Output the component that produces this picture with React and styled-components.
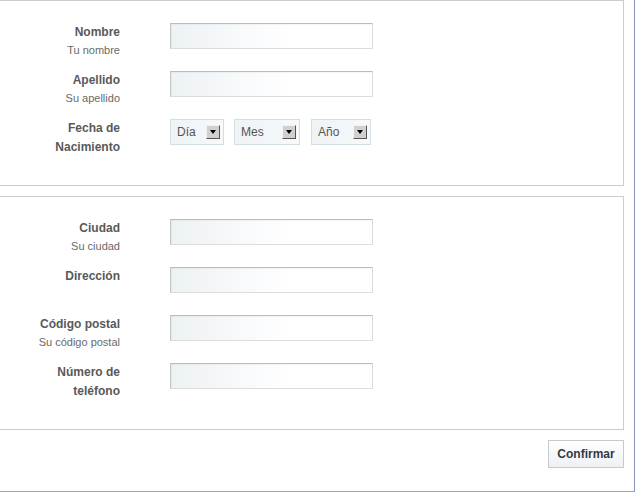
import React from "react";
import styled, { createGlobalStyle } from "styled-components";

const GlobalStyle = createGlobalStyle`
  body {
    margin: 0;
    background: #fff;
    font-family: "Liberation Sans", Arial, sans-serif;
    overflow: hidden;
  }
`;

const personal = [
  { label: "Nombre", hint: "Tu nombre" },
  { label: "Apellido", hint: "Su apellido" },
];

const address = [
  { label: "Ciudad", hint: "Su ciudad" },
  { label: "Dirección" },
  { label: "Código postal", hint: "Su código postal" },
  { label: ["Número de", "teléfono"] },
];

const FieldRow = ({ label, hint }) => (
  <Row>
    <LabelCell>
      {[].concat(label).map((line) => (
        <Title key={line}>{line}</Title>
      ))}
      {hint && <Hint>{hint}</Hint>}
    </LabelCell>
    <TextInput type="text" />
  </Row>
);

const DateSelect = ({ text, width, offset = 0 }) => (
  <SelectWrap $width={width} $offset={offset}>
    <Select defaultValue="">
      <option value="">{text}</option>
    </Select>
    <Arrow>
      <svg width="6" height="4" viewBox="0 0 6 4">
        <path d="M0 0h6L3 4z" fill="#000" />
      </svg>
    </Arrow>
  </SelectWrap>
);

const App = () => {
  return (
    <>
      <GlobalStyle />
      <Page>
        <Fieldset>
          {personal.map((f) => (
            <FieldRow key={f.label} {...f} />
          ))}
          <Row>
            <LabelCell>
              <Title>Fecha de</Title>
              <Title>Nacimiento</Title>
            </LabelCell>
            <Selects>
              <DateSelect text="Día" width={54} />
              <DateSelect text="Mes" width={66} />
              <DateSelect text="Año" width={60} offset={1} />
            </Selects>
          </Row>
        </Fieldset>
        <Fieldset $spaced>
          {address.map((f) => (
            <FieldRow key={[].concat(f.label).join(" ")} {...f} />
          ))}
        </Fieldset>
        <ButtonBar>
          <Button type="button">Confirmar</Button>
        </ButtonBar>
      </Page>
    </>
  );
};

export default App;

const Page = styled.div`
  box-sizing: border-box;
  width: 647px;
  margin-left: -12px;
  padding-bottom: 23px;
  border-right: 1px solid #8795bd;
  border-bottom: 1px solid #a0a5b2;
`;

const Fieldset = styled.fieldset`
  margin: ${(p) => (p.$spaced ? "10px" : "0")} 10px 0 0;
  padding: 21px 0 19px 0;
  border: 1px solid #cccccc;
  min-width: 0;
`;

const Row = styled.div`
  display: grid;
  grid-template-columns: 131px auto;
  column-gap: 50px;
  align-items: start;
  min-height: 48px;
`;

const LabelCell = styled.div`
  margin-top: 1px;
  text-align: right;
`;

const Title = styled.div`
  font-size: 12px;
  font-weight: bold;
  line-height: 19px;
  color: #595959;
`;

const Hint = styled.div`
  font-size: 11px;
  line-height: 16px;
  color: #6a6a6a;
`;

const TextInput = styled.input`
  box-sizing: border-box;
  width: 203px;
  height: 26px;
  margin: 1px 0 0;
  padding: 0 6px;
  border: 1px solid;
  border-color: #bcbcbc #dcdcdc #dcdcdc #c6c6c6;
  background: linear-gradient(to right, #edf2f5 0%, #ffffff 60%);
  box-shadow: inset 1px 1px 1px rgba(0, 0, 0, 0.04);
  outline: none;
`;

const Selects = styled.div`
  display: flex;
  gap: 10px;
  margin-top: 1px;
`;

const SelectWrap = styled.div`
  position: relative;
  width: ${(p) => p.$width}px;
  height: 26px;
  margin-left: ${(p) => p.$offset}px;
`;

const Select = styled.select`
  appearance: none;
  box-sizing: border-box;
  width: 100%;
  height: 100%;
  margin: 0;
  padding: 0 0 0 6px;
  border: 1px solid #d3dde4;
  border-radius: 0;
  background: linear-gradient(to right, #eef3f6, #f7f9fb);
  font-family: "Liberation Sans", Arial, sans-serif;
  font-size: 12px;
  color: #555555;
  outline: none;
`;

const Arrow = styled.span`
  position: absolute;
  top: 6px;
  right: 4px;
  box-sizing: border-box;
  width: 14px;
  height: 14px;
  display: flex;
  align-items: center;
  justify-content: center;
  background: #d0d0d0;
  border: 1px solid;
  border-color: #f2f2f2 #555555 #555555 #f2f2f2;
  pointer-events: none;
`;

const ButtonBar = styled.div`
  display: flex;
  justify-content: flex-end;
  padding: 10px 10px 0 0;
`;

const Button = styled.button`
  box-sizing: border-box;
  width: 76px;
  height: 28px;
  padding: 0;
  border: 1px solid #c9c9c9;
  background: linear-gradient(#ffffff, #eef1f4);
  font-family: "Liberation Sans", Arial, sans-serif;
  font-size: 12px;
  font-weight: bold;
  color: #333a44;
  cursor: pointer;
`;
